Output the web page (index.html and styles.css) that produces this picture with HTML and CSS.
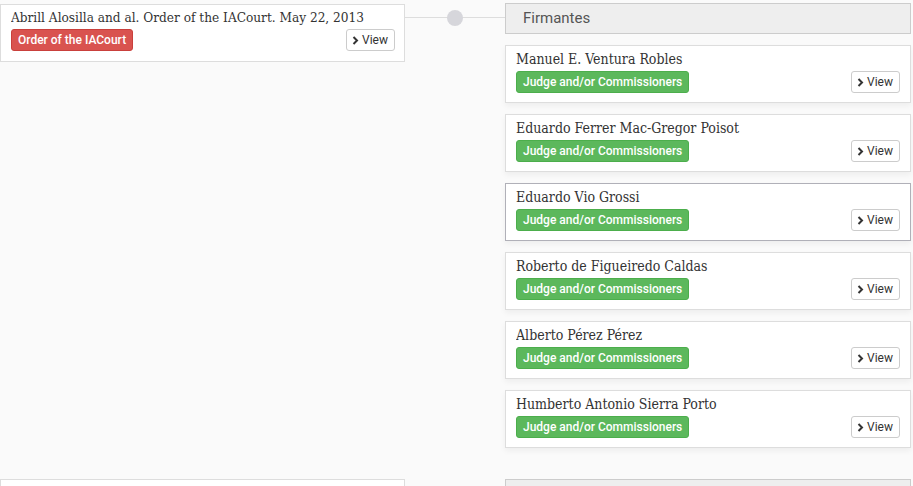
FILE: index.html
```html
<!DOCTYPE html>
<html>
<head>
<meta charset="utf-8">
<link rel="stylesheet" href="styles.css">
</head>
<body>
<div class="timeline">
  <div class="row">
    <div class="left">
      <div class="card doc">
        <div class="title">Abrill Alosilla and al. Order of the IACourt. May 22, 2013</div>
        <div class="meta">
          <span class="badge red">Order of the IACourt</span>
          <a class="btn"><svg width="7" height="9" viewBox="0 0 7 9"><path d="M1.5 1 L5 4.5 L1.5 8" fill="none" stroke="#333" stroke-width="2"/></svg>View</a>
        </div>
      </div>
    </div>
    <div class="connector"><span class="dot"></span></div>
    <div class="right">
      <div class="header">Firmantes</div>
      <div class="card person">
        <div class="title">Manuel E. Ventura Robles</div>
        <div class="meta"><span class="badge green">Judge and/or Commissioners</span><a class="btn"><svg width="7" height="9" viewBox="0 0 7 9"><path d="M1.5 1 L5 4.5 L1.5 8" fill="none" stroke="#333" stroke-width="2"/></svg>View</a></div>
      </div>
      <div class="card person">
        <div class="title">Eduardo Ferrer Mac-Gregor Poisot</div>
        <div class="meta"><span class="badge green">Judge and/or Commissioners</span><a class="btn"><svg width="7" height="9" viewBox="0 0 7 9"><path d="M1.5 1 L5 4.5 L1.5 8" fill="none" stroke="#333" stroke-width="2"/></svg>View</a></div>
      </div>
      <div class="card person active">
        <div class="title">Eduardo Vio Grossi</div>
        <div class="meta"><span class="badge green">Judge and/or Commissioners</span><a class="btn"><svg width="7" height="9" viewBox="0 0 7 9"><path d="M1.5 1 L5 4.5 L1.5 8" fill="none" stroke="#333" stroke-width="2"/></svg>View</a></div>
      </div>
      <div class="card person">
        <div class="title">Roberto de Figueiredo Caldas</div>
        <div class="meta"><span class="badge green">Judge and/or Commissioners</span><a class="btn"><svg width="7" height="9" viewBox="0 0 7 9"><path d="M1.5 1 L5 4.5 L1.5 8" fill="none" stroke="#333" stroke-width="2"/></svg>View</a></div>
      </div>
      <div class="card person">
        <div class="title">Alberto Pérez Pérez</div>
        <div class="meta"><span class="badge green">Judge and/or Commissioners</span><a class="btn"><svg width="7" height="9" viewBox="0 0 7 9"><path d="M1.5 1 L5 4.5 L1.5 8" fill="none" stroke="#333" stroke-width="2"/></svg>View</a></div>
      </div>
      <div class="card person">
        <div class="title">Humberto Antonio Sierra Porto</div>
        <div class="meta"><span class="badge green">Judge and/or Commissioners</span><a class="btn"><svg width="7" height="9" viewBox="0 0 7 9"><path d="M1.5 1 L5 4.5 L1.5 8" fill="none" stroke="#333" stroke-width="2"/></svg>View</a></div>
      </div>
    </div>
  </div>
  <div class="row">
    <div class="left">
      <div class="card doc next"></div>
    </div>
    <div class="connector"></div>
    <div class="right">
      <div class="header"></div>
    </div>
  </div>
</div>
</body>
</html>
```

FILE: styles.css
```css
html, body {
  margin: 0;
  padding: 0;
  background: #fafafa;
  font-family: Roboto, "Liberation Sans", sans-serif;
  color: #333;
  overflow: hidden;
  height: 486px;
}
.timeline {
  display: flex;
  flex-direction: column;
  gap: 31px;
  padding-top: 3px;
}
.row {
  display: grid;
  grid-template-columns: 405px 100px 406px;
  align-items: start;
}
.card {
  background: #fff;
  border: 1px solid #ddd;
  box-sizing: border-box;
}
.doc {
  height: 58px;
  padding: 2px 9px 0 10px;
  margin-top: 1px;
}
.doc.next { margin-top: 0; }
.title {
  font-family: "DejaVu Serif Condensed", "DejaVu Serif", "Liberation Serif", serif;
  font-stretch: condensed;
  font-size: 14px;
  color: #333;
  line-height: 20px;
  white-space: nowrap;
  overflow: hidden;
}
.doc .title { font-size: 13.5px; }
.meta {
  display: flex;
  justify-content: space-between;
  align-items: center;
  margin-top: 2px;
}
.badge {
  display: inline-block;
  color: #fff;
  font-size: 12px;
  font-weight: 500;
  line-height: 20px;
  height: 22px;
  box-sizing: border-box;
  padding: 0 6px;
  border-radius: 3px;
}
.red { background: #d9534f; border: 1px solid #c9403c; }
.green { background: #5cb85c; border: 1px solid #4cae4c; }
.btn {
  display: inline-flex;
  align-items: center;
  gap: 3px;
  height: 22px;
  box-sizing: border-box;
  padding: 0 6px 0 5px;
  border: 1px solid #ccc;
  border-radius: 3px;
  background: #fff;
  font-size: 12px;
  color: #333;
}
.connector {
  position: relative;
  height: 30px;
}
.row:first-child .connector::before {
  content: "";
  position: absolute;
  left: 0;
  right: 0;
  top: 14px;
  border-top: 1px solid #ddd;
}
.dot {
  position: absolute;
  left: 42px;
  top: 7px;
  width: 16px;
  height: 16px;
  border-radius: 50%;
  background: #d6d6db;
}
.right {
  display: flex;
  flex-direction: column;
  gap: 11px;
}
.header {
  height: 31px;
  box-sizing: border-box;
  background: #eee;
  border: 1px solid #ccc;
  padding-left: 17px;
  line-height: 29px;
  font-size: 15px;
  color: #555;
}
.person {
  height: 58px;
  padding: 3px 10px 0 10px;
  box-shadow: 0 3px 6px rgba(0,0,0,0.05);
}
.active { border-color: #b0b0b8; }
```
